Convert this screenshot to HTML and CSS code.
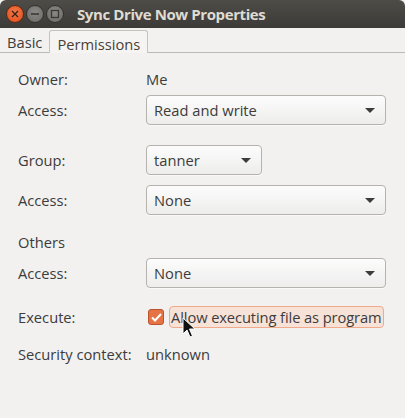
FILE: index.html
```html
<!DOCTYPE html>
<html>
<head>
<meta charset="utf-8">
<link rel="stylesheet" href="styles.css">
</head>
<body>
<div class="window">
  <div class="titlebar">
    <div class="wbtns">
      <span class="wbtn close"><svg width="8" height="8" viewBox="0 0 8 8"><path d="M1 1L7 7M7 1L1 7" stroke="#3a2218" stroke-width="1.4"/></svg></span>
      <span class="wbtn"><svg width="10" height="10" viewBox="0 0 10 10"><path d="M1 5H9" stroke="#3a3936" stroke-width="1.6"/></svg></span>
      <span class="wbtn"><svg width="10" height="10" viewBox="0 0 10 10"><rect x="1.5" y="1.5" width="7" height="7" fill="none" stroke="#3a3936" stroke-width="1.3"/></svg></span>
    </div>
    <div class="title">Sync Drive Now Properties</div>
  </div>
  <div class="tabs">
    <div class="tab">Basic</div>
    <div class="tab active">Permissions</div>
    <div class="tabfill"></div>
  </div>
  <div class="content">
    <div class="row r-owner"><span class="label">Owner:</span><span class="value">Me</span></div>
    <div class="row r-combo1"><span class="label">Access:</span><div class="combo wide"><span>Read and write</span><i class="arrow"></i></div></div>
    <div class="row r-group"><span class="label">Group:</span><div class="combo narrow"><span>tanner</span><i class="arrow"></i></div></div>
    <div class="row r-combo2"><span class="label">Access:</span><div class="combo wide"><span>None</span><i class="arrow"></i></div></div>
    <div class="row r-others"><span class="label">Others</span></div>
    <div class="row r-combo3"><span class="label">Access:</span><div class="combo wide"><span>None</span><i class="arrow"></i></div></div>
    <div class="row r-exec"><span class="label">Execute:</span>
      <div class="check">
        <span class="box"><svg width="11" height="9" viewBox="0 0 11 9"><path d="M1 4.5L4 7.5L10 1" fill="none" stroke="#fff" stroke-width="2"/></svg></span>
        <span class="checklabel">Allow executing file as program</span>
        <svg class="cursor" width="14" height="22" viewBox="0 0 14 22"><path d="M1 1V17L5 13L8 20L10.5 19L7.5 12H13Z" fill="#111" stroke="#fff" stroke-width="1"/></svg>
      </div>
    </div>
    <div class="row r-sec"><span class="label">Security context:</span><span class="value">unknown</span></div>
  </div>
</div>
</body>
</html>
```

FILE: styles.css
```css
* { box-sizing: border-box; }
html, body { margin: 0; padding: 0; }
body {
  background: #f2f1f0;
  font-family: "Open Sans", "DejaVu Sans", sans-serif;
  font-size: 14.7px;
  color: #3c3c3c;
  width: 405px;
  height: 418px;
  overflow: hidden;
}
.window { width: 405px; height: 418px; background: #f2f1f0; }
.titlebar {
  height: 28px;
  background: linear-gradient(#4d4c47, #3c3b37);
  border-radius: 6px 6px 0 0;
  display: flex;
  align-items: center;
  padding-left: 6px;
}
.wbtns { display: flex; gap: 2px; }
.wbtn {
  width: 18px; height: 18px; border-radius: 50%;
  background: radial-gradient(circle at 50% 40%, #8a8985, #6a6965);
  border: 1px solid #33322e;
  display: flex; align-items: center; justify-content: center;
}
.wbtn.close { background: radial-gradient(circle at 50% 40%, #f47a4a, #df4a17); border-color: #5b2a17; }
.title {
  margin-left: 13px;
  color: #dfdbd2;
  font-weight: bold;
  font-size: 15px;
  letter-spacing: -0.4px;
}
.tabs { height: 25px; display: flex; align-items: stretch; }
.tab {
  padding: 3px 7px 0;
  font-size: 14.7px;
  color: #3c3c3c;
  border-bottom: 1px solid #bdbab5;
  line-height: 22px;
}
.tab.active {
  border: 1px solid #c6c3be;
  border-bottom: none;
  border-radius: 3px 3px 0 0;
  background: #f5f4f3;
  color: #4c3f35;
  padding: 2px 7px 0;
  margin-top: 2px;
}
.tabfill { flex: 1; border-bottom: 1px solid #bdbab5; }
.content { padding: 16px 19px 0 18px; }
.row { display: flex; align-items: center; white-space: nowrap; }
.label { width: 128px; flex: none; }
.r-owner { height: 20px; }
.r-combo1 { margin-top: 6px; }
.r-group { margin-top: 20px; }
.r-combo2 { margin-top: 10px; }
.r-others { margin-top: 17px; height: 20px; }
.r-combo3 { margin-top: 6px; }
.r-exec { margin-top: 18px; height: 22px; }
.r-sec { margin-top: 16px; height: 20px; }
.combo {
  height: 30px;
  border: 1px solid #b6b3ae;
  border-radius: 4px;
  background: linear-gradient(#fcfcfc, #eeedec);
  display: flex; align-items: center; justify-content: space-between;
  padding: 0 10px 0 7px;
  box-shadow: 0 1px 0 rgba(255,255,255,0.6);
}
.combo.wide { width: 240px; }
.combo.narrow { width: 116px; }
.arrow {
  width: 0; height: 0;
  border-left: 5px solid transparent;
  border-right: 5px solid transparent;
  border-top: 5px solid #3c3c3c;
}
.check { display: flex; align-items: center; position: relative; flex: none; }
.box {
  width: 16px; height: 16px; border-radius: 3px;
  background: #e57345;
  border: 1px solid #b8552b;
  display: flex; align-items: center; justify-content: center;
  margin-left: 2px;
  flex: none;
}
.checklabel {
  margin-left: 5px;
  height: 22px;
  line-height: 20px;
  padding: 0 1px;
  background: #f7e2d8;
  border: 1px solid #f0a98a;
  border-radius: 4px;
  white-space: nowrap;
  letter-spacing: -0.1px;
}
.cursor { position: absolute; left: 36px; top: 11px; }
```
